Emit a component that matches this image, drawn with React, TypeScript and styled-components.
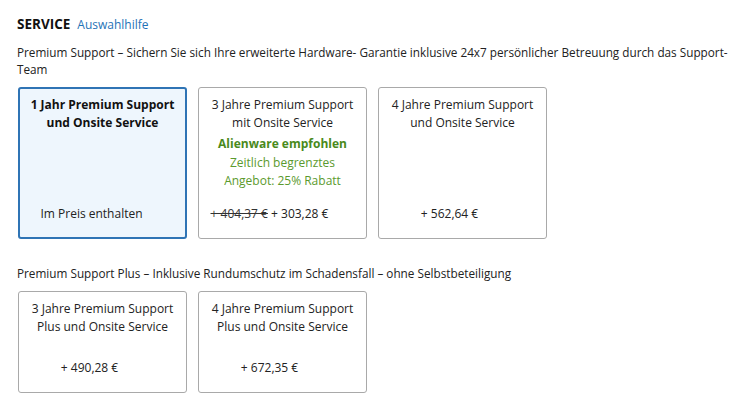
import React from 'react'
import styled, { createGlobalStyle } from 'styled-components'

const GlobalStyle = createGlobalStyle`
  body {
    margin: 0;
    background: #fff;
    font-family: "Open Sans", "Noto Sans", sans-serif;
    color: #222;
  }
`

type Option = {
  title: string
  price: React.ReactNode
  selected?: boolean
  promo?: { headline: string; note: string }
}

const premium: Option[] = [
  { title: '1 Jahr Premium Support und Onsite Service', price: 'Im Preis enthalten', selected: true },
  {
    title: '3 Jahre Premium Support mit Onsite Service',
    price: (
      <>
        <s>+ 404,37 €</s> + 303,28 €
      </>
    ),
    promo: { headline: 'Alienware empfohlen', note: 'Zeitlich begrenztes Angebot: 25% Rabatt' },
  },
  { title: '4 Jahre Premium Support und Onsite Service', price: '+ 562,64 €' },
]

const plus: Option[] = [
  { title: '3 Jahre Premium Support Plus und Onsite Service', price: '+ 490,28 €' },
  { title: '4 Jahre Premium Support Plus und Onsite Service', price: '+ 672,35 €' },
]

function OptionCard({ option }: { option: Option }) {
  const { title, price, selected, promo } = option
  return (
    <Card $selected={!!selected}>
      <CardTitle $selected={!!selected}>{title}</CardTitle>
      {promo && (
        <>
          <PromoHeadline>{promo.headline}</PromoHeadline>
          <PromoNote>{promo.note}</PromoNote>
        </>
      )}
      <Price $selected={!!selected}>{price}</Price>
    </Card>
  )
}

export default function App() {
  return (
    <Page>
      <GlobalStyle />
      <Header>
        <Heading>SERVICE</Heading>
        <HelpLink href="#">Auswahlhilfe</HelpLink>
      </Header>

      <Description>
        Premium Support – Sichern Sie sich Ihre erweiterte Hardware- Garantie inklusive 24x7 persönlicher Betreuung durch das Support-Team
      </Description>
      <CardRow>
        {premium.map(o => <OptionCard key={o.title} option={o} />)}
      </CardRow>

      <Description $spaced>
        Premium Support Plus – Inklusive Rundumschutz im Schadensfall – ohne Selbstbeteiligung
      </Description>
      <CardRow>
        {plus.map(o => <OptionCard key={o.title} option={o} />)}
      </CardRow>
    </Page>
  )
}

const Page = styled.div`
  padding: 14px 5px 0 17px;
  width: 738px;
  box-sizing: border-box;
`

const Header = styled.div`
  display: flex;
  align-items: baseline;
  gap: 7px;
`

const Heading = styled.h2`
  margin: 0;
  font-size: 13.5px;
  font-weight: 700;
  color: #111;
  line-height: 20px;
`

const HelpLink = styled.a`
  font-size: 12px;
  color: #1f73b7;
  text-decoration: none;
`

const Description = styled.p<{ $spaced?: boolean }>`
  margin: ${p => (p.$spaced ? '26px' : '10px')} 0 9px;
  font-size: 11.75px;
  line-height: 17px;
  color: #222;
`

const CardRow = styled.div`
  display: grid;
  grid-template-columns: repeat(3, 169px);
  gap: 11px;
  padding-left: 1px;
`

const Card = styled.div<{ $selected: boolean }>`
  display: flex;
  flex-direction: column;
  min-height: 102px;
  box-sizing: border-box;
  padding: ${p => (p.$selected ? '7px 9px 14px' : '8px 10px 15px')};
  border: ${p => (p.$selected ? '2px solid #2f74b5' : '1px solid #a9a9a9')};
  border-radius: 3px;
  background: ${p => (p.$selected ? '#eef6fd' : '#fff')};
  text-align: center;
  font-size: 12px;
  line-height: 18px;
`

const CardTitle = styled.div<{ $selected: boolean }>`
  font-weight: ${p => (p.$selected ? 700 : 400)};
  color: ${p => (p.$selected ? '#111' : '#222')};
`

const PromoHeadline = styled.div`
  margin-top: 3px;
  font-weight: 700;
  color: #4a8a1c;
`

const PromoNote = styled.div`
  margin-top: 1px;
  padding: 0 10px;
  color: #5b9a2e;
`

const Price = styled.div<{ $selected: boolean }>`
  margin-top: auto;
  padding: ${p => (p.$selected ? '15px 22px 0 0' : '15px 26px 0 0')};
  white-space: nowrap;
  color: #222;

  s {
    color: #333;
  }
`
